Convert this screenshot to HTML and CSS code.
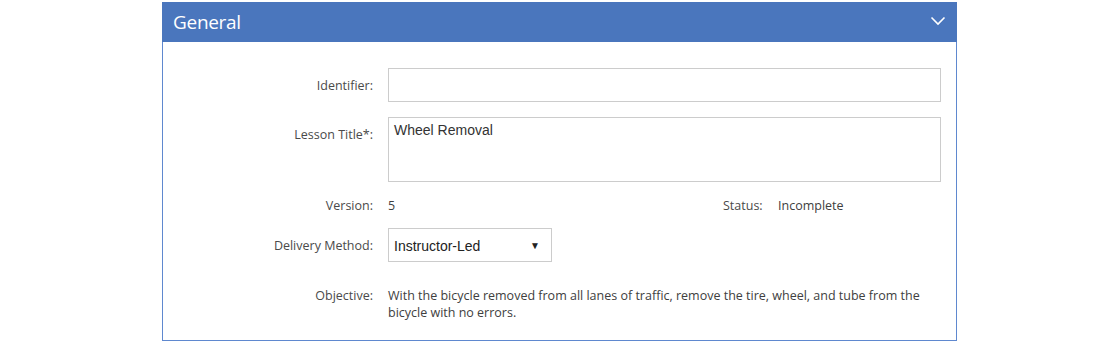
FILE: index.html
```html
<!DOCTYPE html>
<html>
<head>
<meta charset="utf-8">
<link rel="stylesheet" href="styles.css">
</head>
<body>
<div class="panel">
  <div class="panel-header">
    <span class="panel-title">General</span>
    <svg class="chevron" width="16" height="10" viewBox="0 0 16 10"><path d="M1.5 1.5 L8 8 L14.5 1.5" fill="none" stroke="#fff" stroke-width="1.6"/></svg>
  </div>
  <div class="panel-body">
    <div class="row row-input">
      <label class="lbl">Identifier:</label>
      <div class="field"><div class="input"></div></div>
    </div>
    <div class="row row-textarea">
      <label class="lbl">Lesson Title*:</label>
      <div class="field"><div class="textarea">Wheel Removal</div></div>
    </div>
    <div class="row row-text">
      <label class="lbl">Version:</label>
      <div class="field split">
        <span class="val">5</span>
        <span class="status"><span class="status-lbl">Status:</span><span class="val">Incomplete</span></span>
      </div>
    </div>
    <div class="row row-select">
      <label class="lbl">Delivery Method:</label>
      <div class="field"><div class="select"><span class="sel-text">Instructor-Led</span><span class="caret">&#9660;</span></div></div>
    </div>
    <div class="row row-obj">
      <label class="lbl">Objective:</label>
      <div class="field val obj">With the bicycle removed from all lanes of traffic, remove the tire, wheel, and tube from the bicycle with no errors.</div>
    </div>
  </div>
</div>
</body>
</html>
```
FILE: styles.css
```css
html, body { margin: 0; padding: 0; background: #fff; }
body { font-family: "Open Sans", "Noto Sans", sans-serif; }
.panel {
  margin: 2px 0 0 162px;
  width: 795px;
  height: 339px;
  box-sizing: border-box;
  border: 1px solid #5f88cf;
  border-top: none;
}
.panel-header {
  height: 40px;
  margin: 0 -1px;
  background: #4a76bd;
  display: flex;
  align-items: center;
  justify-content: space-between;
  padding: 0 11px 0 11px;
}
.panel-title {
  color: #fff;
  font-size: 19px;
  font-family: "Open Sans", sans-serif;
  letter-spacing: -0.3px;
  margin-top: -1px;
}
.chevron { margin-top: -2px; }
.panel-body {
  padding: 26px 15px 0 0;
  display: flex;
  flex-direction: column;
}
.row { display: flex; align-items: center; }
.lbl {
  width: 210px;
  text-align: right;
  font-size: 12.5px;
  color: #4a4a4a;
  padding-right: 15px;
  flex: none;
}
.field { flex: 1; }
.val { font-size: 12.5px; color: #404040; }
.input {
  height: 34px;
  box-sizing: border-box;
  border: 1px solid #ccc;
}
.row-textarea { margin-top: 15px; align-items: flex-start; }
.row-textarea .lbl { padding-top: 9px; }
.textarea {
  height: 65px;
  box-sizing: border-box;
  border: 1px solid #ccc;
  font-family: "Liberation Sans", Arial, sans-serif;
  font-size: 14px;
  color: #333;
  padding: 4px 5px;
}
.row-text { margin-top: 13px; height: 20px; }
.split { display: flex; justify-content: space-between; }
.status { width: 218px; display: flex; }
.status-lbl { font-size: 12.5px; color: #4a4a4a; width: 55px; }
.row-select { margin-top: 13px; }
.select {
  width: 164px;
  height: 34px;
  box-sizing: border-box;
  border: 1px solid #ccc;
  display: flex;
  align-items: center;
  justify-content: space-between;
  padding: 2px 11px 0 5px;
  font-family: "Liberation Sans", Arial, sans-serif;
  font-size: 14px;
  color: #222;
}
.caret { font-size: 10px; color: #222; margin-top: -2px; }
.row-obj { margin-top: 25px; align-items: flex-start; }
.obj { line-height: 17px; padding-right: 15px; }
.row-obj .lbl { line-height: 17px; }
```
